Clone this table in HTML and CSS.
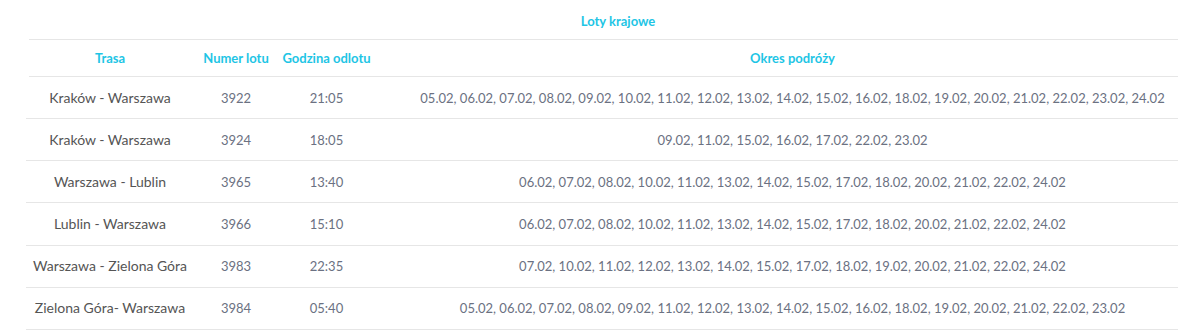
FILE: index.html
```html
<!DOCTYPE html>
<html lang="pl">
<head>
<meta charset="utf-8">
<title>Loty krajowe</title>
<link rel="stylesheet" href="styles.css">
</head>
<body>
<div class="wrap">
<table class="flights">
  <colgroup>
    <col class="c-route">
    <col class="c-num">
    <col class="c-time">
    <col class="c-dates">
  </colgroup>
  <thead>
    <tr class="title-row"><th colspan="4">Loty krajowe</th></tr>
    <tr class="head-row">
      <th>Trasa</th>
      <th>Numer lotu</th>
      <th>Godzina odlotu</th>
      <th>Okres podróży</th>
    </tr>
  </thead>
  <tbody>
    <tr><td class="route">Kraków - Warszawa</td><td>3922</td><td>21:05</td><td>05.02, 06.02, 07.02, 08.02, 09.02, 10.02, 11.02, 12.02, 13.02, 14.02, 15.02, 16.02, 18.02, 19.02, 20.02, 21.02, 22.02, 23.02, 24.02</td></tr>
    <tr><td class="route">Kraków - Warszawa</td><td>3924</td><td>18:05</td><td>09.02, 11.02, 15.02, 16.02, 17.02, 22.02, 23.02</td></tr>
    <tr><td class="route">Warszawa - Lublin</td><td>3965</td><td>13:40</td><td>06.02, 07.02, 08.02, 10.02, 11.02, 13.02, 14.02, 15.02, 17.02, 18.02, 20.02, 21.02, 22.02, 24.02</td></tr>
    <tr><td class="route">Lublin - Warszawa</td><td>3966</td><td>15:10</td><td>06.02, 07.02, 08.02, 10.02, 11.02, 13.02, 14.02, 15.02, 17.02, 18.02, 20.02, 21.02, 22.02, 24.02</td></tr>
    <tr><td class="route">Warszawa - Zielona Góra</td><td>3983</td><td>22:35</td><td>07.02, 10.02, 11.02, 12.02, 13.02, 14.02, 15.02, 17.02, 18.02, 19.02, 20.02, 21.02, 22.02, 24.02</td></tr>
    <tr><td class="route">Zielona Góra- Warszawa</td><td>3984</td><td>05:40</td><td>05.02, 06.02, 07.02, 08.02, 09.02, 11.02, 12.02, 13.02, 14.02, 15.02, 16.02, 18.02, 19.02, 20.02, 21.02, 22.02, 23.02</td></tr>
  </tbody>
</table>
</div>
</body>
</html>
```
FILE: styles.css
```css
html, body {
  margin: 0;
  padding: 0;
  background: #ffffff;
}
body {
  font-family: Lato, "Open Sans", Arial, sans-serif;
  overflow: hidden;
}
.wrap {
  width: 1178px;
  overflow: hidden;
  padding-left: 26px;
  box-sizing: border-box;
}
.flights {
  width: 1184px;
  table-layout: fixed;
  border-collapse: separate;
  border-spacing: 0;
}
.c-route { width: 168px; }
.c-num { width: 84px; }
.c-time { width: 97px; }
.c-dates { width: 835px; }

.flights th {
  color: #1ec5e5;
  font-weight: 700;
  font-size: 13px;
  text-align: center;
  padding: 0;
  white-space: nowrap;
  border-bottom: 1px solid #e6e6e6;
}
.title-row th {
  height: 40px;
  line-height: 16px;
  padding-top: 2px;
  box-sizing: border-box;
  border-bottom: none;
  background: linear-gradient(#e6e6e6, #e6e6e6) no-repeat right 0 bottom 0 / calc(100% - 3px) 1px;
}
.head-row th {
  height: 35px;
  line-height: 16px;
  padding-bottom: 1px;
}
.head-row th:first-child {
  border-bottom: none;
  padding-bottom: 2px;
  background: linear-gradient(#e6e6e6, #e6e6e6) no-repeat right 0 bottom 0 / calc(100% - 3px) 1px;
}
.flights td {
  height: 41.17px;
  padding: 0;
  text-align: center;
  font-size: 13px;
  line-height: 18px;
  color: #6b7182;
  white-space: nowrap;
  border-bottom: 1px solid #e6e6e6;
}
.flights td.route {
  color: #555555;
  font-size: 14px;
}
```
